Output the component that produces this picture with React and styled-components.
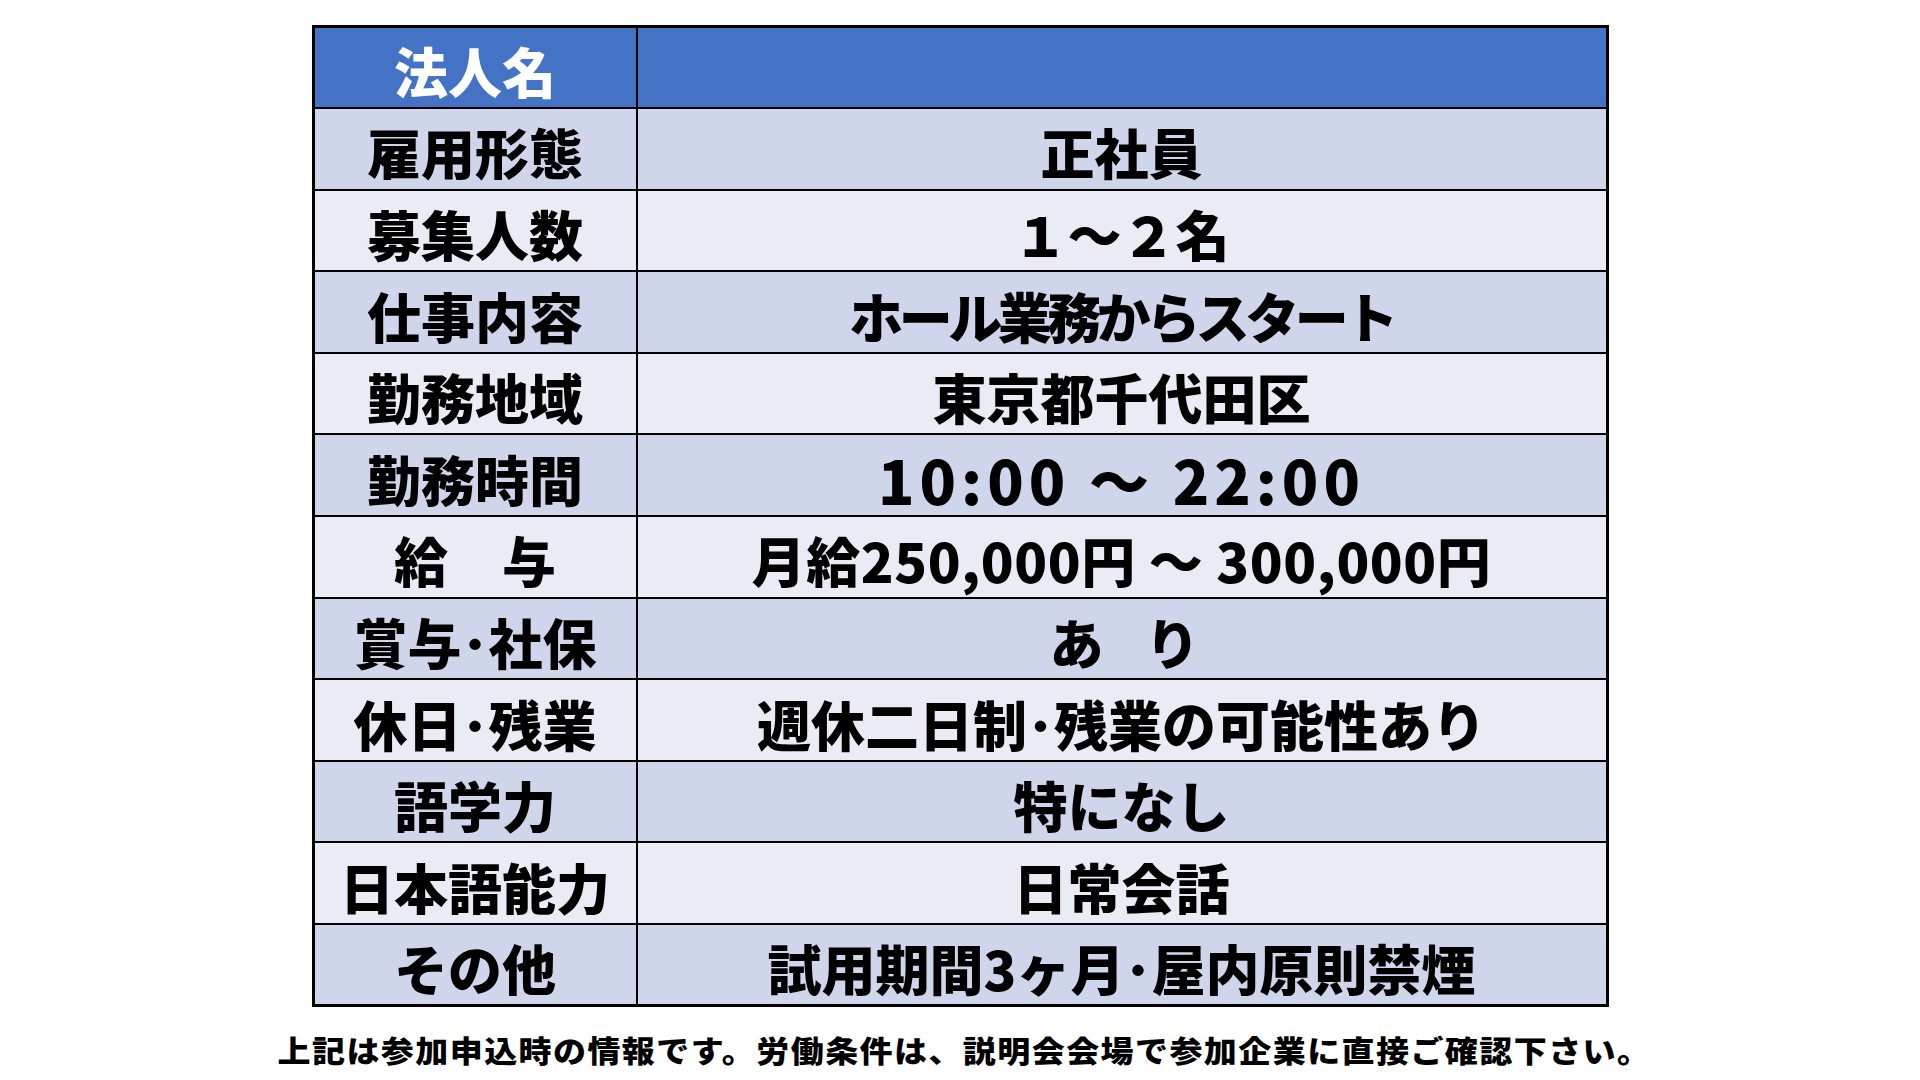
import styled, { createGlobalStyle } from 'styled-components';

const GlobalStyle = createGlobalStyle`
  html, body {
    margin: 0;
    padding: 0;
    background: #ffffff;
  }
  body {
    font-family: "Noto Sans CJK JP", "Noto Sans", sans-serif;
  }
`;

const Page = styled.div`
  width: 1920px;
  height: 1080px;
  display: flex;
  flex-direction: column;
  align-items: center;
  padding-top: 25px;
  box-sizing: border-box;
`;

const Table = styled.table`
  width: 1297px;
  border-collapse: collapse;
  table-layout: fixed;
  border: 3px solid #000;
`;

const Row = styled.tr`
  height: 81.6px;
  background: ${({ $variant }) =>
    $variant === 'head' ? '#4472c4' : $variant === 'odd' ? '#cfd5ea' : '#e9ebf5'};
`;

const Cell = styled.td`
  border: 2px solid #000;
  padding: 7px 0 0;
  text-align: center;
  vertical-align: middle;
  font-size: 54px;
  font-weight: 900;
  line-height: 1;
  white-space: nowrap;
  letter-spacing: ${({ $spacing }) => $spacing || '0'};
  color: ${({ $head }) => ($head ? '#ffffff' : '#000000')};
  width: ${({ $label }) => ($label ? '321px' : 'auto')};
`;

const Wide = styled.span`
  font-size: 60px;
  letter-spacing: 5px;
  font-weight: 900;
`;

const Note = styled.p`
  margin: 20px 0 0 8px;
  font-size: 30px;
  font-weight: 900;
  letter-spacing: 1.3px;
  color: #000;
  white-space: nowrap;
  transform: scaleX(1.1);
`;

const rows = [
  ['雇用形態', '正社員'],
  ['募集人数', '１～２名'],
  ['仕事内容', 'ホール業務からスタート', '-4.5px'],
  ['勤務地域', '東京都千代田区'],
  ['勤務時間', <Wide key="t">10:00 ～ 22:00</Wide>],
  ['給　与', '月給250,000円 ～ 300,000円', '0.6px'],
  ['賞与･社保', 'あ　り', '-6px'],
  ['休日･残業', '週休二日制･残業の可能性あり'],
  ['語学力', '特になし'],
  ['日本語能力', '日常会話'],
  ['その他', '試用期間3ヶ月･屋内原則禁煙'],
];

export default function App() {
  return (
    <Page>
      <GlobalStyle />
      <Table>
        <tbody>
          <Row $variant="head">
            <Cell $head $label>法人名</Cell>
            <Cell $head></Cell>
          </Row>
          {rows.map(([label, value, spacing], i) => (
            <Row key={i} $variant={i % 2 === 0 ? 'odd' : 'even'}>
              <Cell $label>{label}</Cell>
              <Cell $spacing={spacing}>{value}</Cell>
            </Row>
          ))}
        </tbody>
      </Table>
      <Note>上記は参加申込時の情報です。労働条件は、説明会会場で参加企業に直接ご確認下さい。</Note>
    </Page>
  );
}
